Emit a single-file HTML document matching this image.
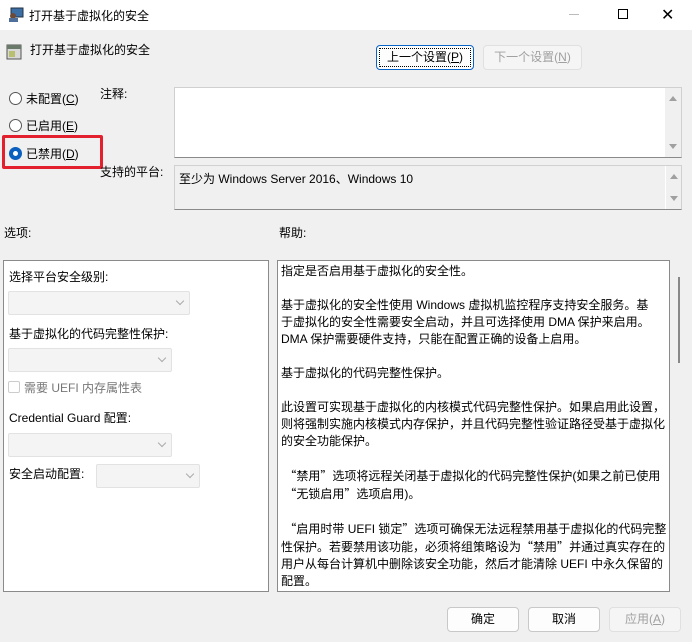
<!DOCTYPE html>
<html><head><meta charset="utf-8"><style>
*{box-sizing:border-box;margin:0;padding:0}
body{width:692px;height:642px;background:#f0f0f0;font-family:"Liberation Sans","Noto Sans CJK SC",sans-serif;font-size:12px;color:#000;position:relative;overflow:hidden}
.a{position:absolute;white-space:nowrap}
.box{position:absolute;background:#fff;border:1px solid #8a8a8a}
.rad{position:absolute;width:13px;height:13px;border:1px solid #555;border-radius:50%;background:#fff}
.btn{position:absolute;height:25px;border:1px solid #c8c8c8;border-radius:4px;background:#fdfdfd;text-align:center;line-height:23px;font-size:12px}
.dd{position:absolute;height:24px;border:1px solid #e2e2e2;border-radius:2px;background:#f4f4f4}
.dd:after{content:"";position:absolute;right:6px;top:6px;width:5px;height:5px;border-right:1px solid #aaa;border-bottom:1px solid #aaa;transform:rotate(45deg)}
.sb{position:absolute;right:0;top:0;bottom:0;width:16px;background:#f0f0f0}
.up,.dn{position:absolute;left:4px;width:0;height:0;border-left:4px solid transparent;border-right:4px solid transparent}
.up{top:8px;border-bottom:5px solid #a0a0a0}.dn{bottom:8px;border-top:5px solid #a0a0a0}
.help{position:absolute;left:281px;top:263px;width:390px;line-height:17px;font-size:12px;white-space:nowrap}
.q{font-family:"Noto Sans CJK SC",sans-serif}
</style></head><body>
<div class="a" style="left:0;top:0;width:692px;height:30px;background:#fff"></div>
<svg class="a" style="left:8px;top:7px" width="16" height="16"><rect x="3" y="1" width="12" height="9" fill="#3a6ea5" stroke="#234"/><circle cx="5" cy="9" r="3" fill="#6b4a3a"/><rect x="1" y="11" width="9" height="4" fill="#4f6f9a"/></svg>
<div class="a" style="left:29px;top:7px">打开基于虚拟化的安全</div>
<div class="a" style="left:569px;top:14px;width:10px;height:1px;background:#bbb"></div>
<div class="a" style="left:618px;top:9px;width:10px;height:10px;border:1px solid #000"></div>
<div class="a" style="left:661px;top:5px;font-size:16px">✕</div>
<svg class="a" style="left:6px;top:44px" width="16" height="16"><rect x="1" y="1" width="14" height="14" fill="#d8d8d8" stroke="#555"/><rect x="1" y="1" width="14" height="4" fill="#6a7a6a"/><rect x="3" y="7" width="6" height="6" fill="#b8c070"/></svg>
<div class="a" style="left:30px;top:41px">打开基于虚拟化的安全</div>
<div class="btn" style="left:376px;top:45px;width:98px;border:1px solid #0a64c8;outline:1px dotted #000;outline-offset:-4px">上一个设置(<u>P</u>)</div>
<div class="btn" style="left:483px;top:45px;width:99px;color:#a0a0a0;background:#f5f5f5;border-color:#e0e0e0">下一个设置(<u>N</u>)</div>
<div class="rad" style="left:9px;top:92px"></div><div class="a" style="left:26px;top:90px">未配置(<u>C</u>)</div>
<div class="rad" style="left:9px;top:119px"></div><div class="a" style="left:26px;top:117px">已启用(<u>E</u>)</div>
<div class="rad" style="left:9px;top:147px;border:4px solid #0a5fbf"></div><div class="a" style="left:26px;top:145px">已禁用(<u>D</u>)</div>
<div class="a" style="left:2px;top:135px;width:101px;height:34px;border:3px solid #e3202d;border-radius:2px"></div>
<div class="a" style="left:100px;top:85px">注释:</div>
<div class="a" style="left:100px;top:163px">支持的平台:</div>
<div class="box" style="left:174px;top:87px;width:508px;height:71px;border-color:#d0d0d0;border-bottom-color:#8a8a8a"><div class="sb"><div class="up"></div><div class="dn"></div></div></div>
<div class="box" style="left:174px;top:165px;width:508px;height:45px;background:#f0f0f0;border-color:#d0d0d0;border-bottom-color:#8a8a8a"><div class="a" style="left:4px;top:4px">至少为 Windows Server 2016、Windows 10</div><div class="sb" style="border-left:1px solid #fff"><div class="up"></div><div class="dn"></div></div></div>
<div class="a" style="left:4px;top:224px">选项:</div>
<div class="a" style="left:279px;top:224px">帮助:</div>
<div class="box" style="left:3px;top:260px;width:266px;height:332px">
<div class="a" style="left:5px;top:7px">选择平台安全级别:</div>
<div class="dd" style="left:4px;top:30px;width:182px"></div>
<div class="a" style="left:5px;top:64px">基于虚拟化的代码完整性保护:</div>
<div class="dd" style="left:4px;top:87px;width:164px"></div>
<div class="a" style="left:4px;top:120px;width:12px;height:12px;border:1px solid #ccc;border-radius:2px"></div>
<div class="a" style="left:20px;top:118px;color:#777">需要 UEFI 内存属性表</div>
<div class="a" style="left:5px;top:148px">Credential Guard 配置:</div>
<div class="dd" style="left:4px;top:172px;width:164px"></div>
<div class="a" style="left:5px;top:204px">安全启动配置:</div>
<div class="dd" style="left:92px;top:203px;width:104px"></div>
</div>
<div class="box" style="left:277px;top:260px;width:393px;height:332px"></div>
<div class="a" style="left:678px;top:277px;width:2px;height:86px;background:#888"></div>
<div class="help">指定是否启用基于虚拟化的安全性。<br><br>基于虚拟化的安全性使用 Windows 虚拟机监控程序支持安全服务。基<br>于虚拟化的安全性需要安全启动，并且可选择使用 DMA 保护来启用。<br>DMA 保护需要硬件支持，只能在配置正确的设备上启用。<br><br>基于虚拟化的代码完整性保护。<br><br>此设置可实现基于虚拟化的内核模式代码完整性保护。如果启用此设置，<br>则将强制实施内核模式内存保护，并且代码完整性验证路径受基于虚拟化<br>的安全功能保护。<br><br>&nbsp;<span class="q">“</span>禁用<span class="q">”</span>选项将远程关闭基于虚拟化的代码完整性保护(如果之前已使用<br>&nbsp;<span class="q">“</span>无锁启用<span class="q">”</span>选项启用)。<br><br>&nbsp;<span class="q">“</span>启用时带 UEFI 锁定<span class="q">”</span>选项可确保无法远程禁用基于虚拟化的代码完整<br>性保护。若要禁用该功能，必须将组策略设为<span class="q">“</span>禁用<span class="q">”</span>并通过真实存在的<br>用户从每台计算机中删除该安全功能，然后才能清除 UEFI 中永久保留的<br>配置。</div>
<div class="btn" style="left:447px;top:607px;width:72px">确定</div>
<div class="btn" style="left:528px;top:607px;width:72px">取消</div>
<div class="btn" style="left:609px;top:607px;width:72px;color:#a0a0a0;background:#f5f5f5;border-color:#e0e0e0">应用(<u>A</u>)</div>
</body></html>
